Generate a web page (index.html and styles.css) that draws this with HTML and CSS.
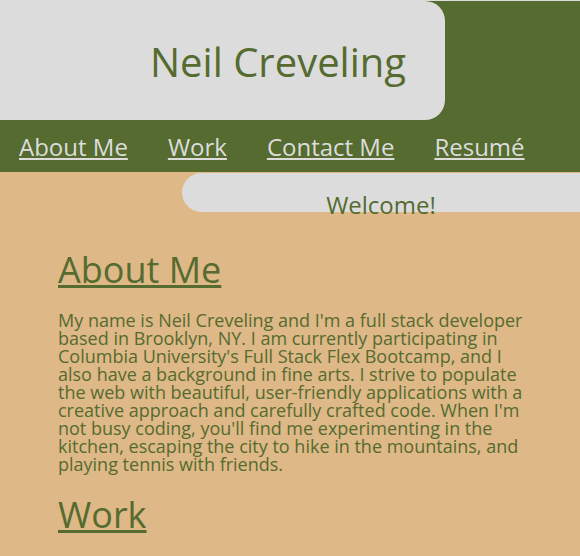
FILE: index.html
```html
<!DOCTYPE html>
<html lang="en">
<head>
<meta charset="utf-8">
<title>Neil Creveling</title>
<link rel="stylesheet" href="styles.css">
</head>
<body>
<header class="site-header">
  <div class="title-row">
    <div class="name-box"><h1 class="name">Neil Creveling</h1></div>
  </div>
  <nav class="nav">
    <a href="#about">About Me</a>
    <a href="#work">Work</a>
    <a href="#contact">Contact Me</a>
    <a href="#resume">Resumé</a>
  </nav>
</header>
<div class="welcome"><span class="welcome-text">Welcome!</span></div>
<main class="content">
  <section id="about">
    <h2 class="section-title"><a href="#about">About Me</a></h2>
    <p class="bio">My name is Neil Creveling and I'm a full stack developer based in Brooklyn, NY. I am currently participating in Columbia University's Full Stack Flex Bootcamp, and I also have a background in fine arts. I strive to populate the web with beautiful, user-friendly applications with a creative approach and carefully crafted code. When I'm not busy coding, you'll find me experimenting in the kitchen, escaping the city to hike in the mountains, and playing tennis with friends.</p>
  </section>
  <section id="work">
    <h2 class="section-title"><a href="#work">Work</a></h2>
  </section>
</main>
</body>
</html>
```
FILE: styles.css
```css
html { background: #dcdcdc; }
body {
  margin: 0;
  margin-top: 1px;
  background: #deb887;
  font-family: "Open Sans", "DejaVu Sans", sans-serif;
  color: #556b2f;
  min-height: 555px;
}
.site-header { background: #556b2f; }
.title-row { display: flex; }
.name-box {
  width: 445px;
  height: 119px;
  background: #dcdcdc;
  border-radius: 0 20px 20px 0;
  display: flex;
  align-items: center;
  padding-left: 150px;
  box-sizing: border-box;
}
.name {
  margin: 0;
  font-weight: 400;
  font-size: 40px;
  line-height: 1;
  color: #556b2f;
  padding-top: 2px;
}
.nav {
  display: flex;
  gap: 40px;
  padding: 0 19px;
  height: 52px;
  align-items: center;
}
.nav a {
  color: #dcdcdc;
  font-size: 24px;
  line-height: 1;
  text-decoration: underline;
  padding-top: 2px;
}
.welcome {
  margin: 1px 0 0 182px;
  height: 39px;
  background: #dcdcdc;
  border-radius: 20px 0 0 20px;
  text-align: center;
}
.welcome-text {
  display: inline-block;
  font-size: 24px;
  line-height: 1;
  padding-top: 20px;
  color: #556b2f;
}
.content { padding: 0 48px 0 58px; }
.section-title {
  margin: 0;
  font-weight: 400;
  font-size: 36px;
  line-height: 1;
}
.section-title a { color: #556b2f; text-decoration: underline; }
#about .section-title { padding-top: 40px; }
.bio {
  margin: 23px 0 0;
  font-size: 18px;
  line-height: 18px;
}
#work .section-title { padding-top: 24px; }
```
